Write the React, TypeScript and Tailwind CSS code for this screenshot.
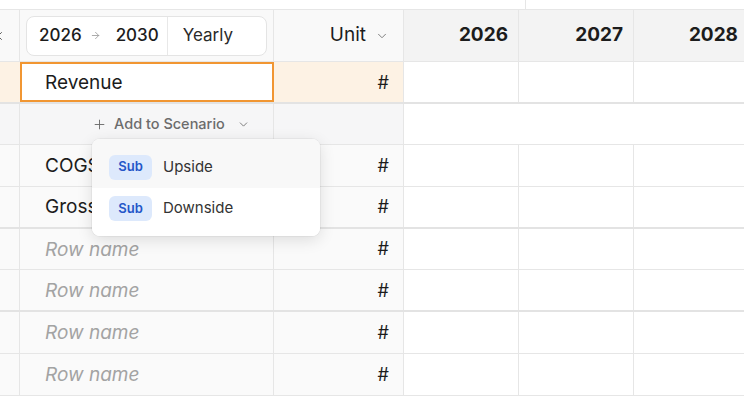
import { ChevronDown, Plus, X, ArrowRight } from "lucide-react";

const rows = [
  { name: "COGS", placeholder: false },
  { name: "Gross Profit", placeholder: false },
  { name: "Row name", placeholder: true },
  { name: "Row name", placeholder: true },
  { name: "Row name", placeholder: true },
  { name: "Row name", placeholder: true },
];

const years = ["2026", "2027", "2028"];

function YearCells({ bg = "bg-white" }: { bg?: string }) {
  return (
    <>
      {years.map((y) => (
        <div key={y} className={`w-[115px] shrink-0 h-full border-r border-[#e6e6e6] ${bg}`} />
      ))}
    </>
  );
}

export default function App() {
  return (
    <div
      className="relative w-[744px] h-[400px] overflow-hidden bg-white text-[#1c1c1c]"
      style={{ fontFamily: "Inter, 'Noto Sans', sans-serif" }}
    >
      {/* top strip */}
      <div className="flex h-[10px] border-b border-[#e6e6e6]">
        <div className="w-[526px] shrink-0 border-r border-[#e6e6e6]" />
      </div>

      {/* header */}
      <div className="flex h-[52px] border-b border-[#e6e6e6]">
        <div className="w-[20px] shrink-0 bg-[#f9f9f9] border-r border-[#e6e6e6] flex items-center overflow-hidden">
          <X size={14} strokeWidth={1.6} className="-ml-[9px] text-[#555]" />
        </div>
        <div className="w-[254px] shrink-0 bg-[#f9f9f9] border-r border-[#e6e6e6] flex items-center px-[6px]">
          <div className="flex items-center h-[40px] w-[242px] rounded-[8px] border border-[#e4e4e4] bg-white text-[17px]">
            <div className="flex items-center pl-[12px] pr-[8px] h-full font-medium">
              <span>2026</span>
              <ArrowRight size={11} strokeWidth={1.8} className="mx-[8px] text-[#9a9a9a]" />
              <span className="ml-[7px]">2030</span>
            </div>
            <div className="h-full border-l border-[#e8e8e8] pl-[15px] flex items-center text-[#2a2a2a]">Yearly</div>
          </div>
        </div>
        <div className="w-[130px] shrink-0 bg-[#f9f9f9] border-r border-[#e6e6e6] flex items-center justify-end pr-[14px] gap-[9px]">
          <span className="text-[19px]">Unit</span>
          <ChevronDown size={14} strokeWidth={1.6} className="text-[#777]" />
        </div>
        {years.map((y) => (
          <div
            key={y}
            className="w-[115px] shrink-0 bg-[#f3f3f3] border-r border-[#e6e6e6] flex items-center justify-end pr-[10px] text-[19px] font-bold"
          >
            {y}
          </div>
        ))}
      </div>

      {/* revenue row */}
      <div className="flex h-[42px] border-b-2 border-[#e3e3e3]">
        <div className="w-[20px] shrink-0 bg-[#fdf2e4] h-full" />
        <div className="w-[254px] shrink-0 h-full border-2 border-[#f19632] bg-white flex items-center pl-[23px] pt-[2px] text-[19px]">
          Revenue
        </div>
        <div className="w-[130px] shrink-0 h-full bg-[#fdf2e4] border-r border-[#e6e6e6] flex items-center justify-end pr-[14px] text-[18px]">
          #
        </div>
        <YearCells />
      </div>

      {/* add to scenario row */}
      <div className="flex h-[41px] border-b border-[#e6e6e6]">
        <div className="w-[20px] shrink-0 bg-[#f6f6f7] border-r border-[#e6e6e6] h-full" />
        <div className="w-[254px] shrink-0 bg-[#f6f6f7] border-r border-[#e6e6e6] h-full flex items-center pl-[72px] text-[14.5px] font-medium text-[#6c6c6c]">
          <Plus size={15} strokeWidth={1.5} className="mr-[7px]" />
          <span>Add to Scenario</span>
          <ChevronDown size={13} strokeWidth={1.6} className="ml-[12px]" />
        </div>
        <div className="w-[130px] shrink-0 bg-[#f6f6f7] border-r border-[#e6e6e6] h-full" />
        <div className="flex-1 bg-white h-full" />
      </div>

      {/* rows */}
      {rows.map((r, i) => (
        <div
          key={i}
          className={`flex h-[41.8px] ${i === 1 || i === 3 ? "border-b-2 border-[#e3e3e3]" : "border-b border-[#e6e6e6]"}`}
        >
          <div className="w-[20px] shrink-0 bg-[#fafafa] border-r border-[#e6e6e6] h-full" />
          <div
            className={`w-[254px] shrink-0 bg-[#fafafa] border-r border-[#e6e6e6] h-full flex items-center pl-[25px] pt-[2px] text-[19px] whitespace-nowrap overflow-hidden ${
              r.placeholder ? "italic text-[#a3a3a3] text-[18px]" : ""
            }`}
          >
            {r.name}
          </div>
          <div className="w-[130px] shrink-0 bg-[#fafafa] border-r border-[#e6e6e6] h-full flex items-center justify-end pr-[14px] text-[18px]">
            #
          </div>
          <YearCells />
        </div>
      ))}

      {/* dropdown menu */}
      <div className="absolute left-[92px] top-[139px] w-[228px] rounded-[8px] bg-white shadow-[0_4px_16px_rgba(0,0,0,0.12),0_0_0_1px_rgba(0,0,0,0.04)] overflow-hidden">
        <div className="flex items-center h-[49px] pt-[7px] pl-[17px] gap-[11px] bg-[#f8f8f8]">
          <span className="inline-flex items-center justify-center w-[43px] h-[25px] rounded-[6px] bg-[#dde9fc] text-[#2456c8] text-[13px] font-semibold">
            Sub
          </span>
          <span className="text-[15px] text-[#333]">Upside</span>
        </div>
        <div className="flex items-center h-[48px] pb-[7px] pl-[17px] gap-[11px] bg-white">
          <span className="inline-flex items-center justify-center w-[43px] h-[25px] rounded-[6px] bg-[#dde9fc] text-[#2456c8] text-[13px] font-semibold">
            Sub
          </span>
          <span className="text-[15px] text-[#333]">Downside</span>
        </div>
      </div>
    </div>
  );
}
